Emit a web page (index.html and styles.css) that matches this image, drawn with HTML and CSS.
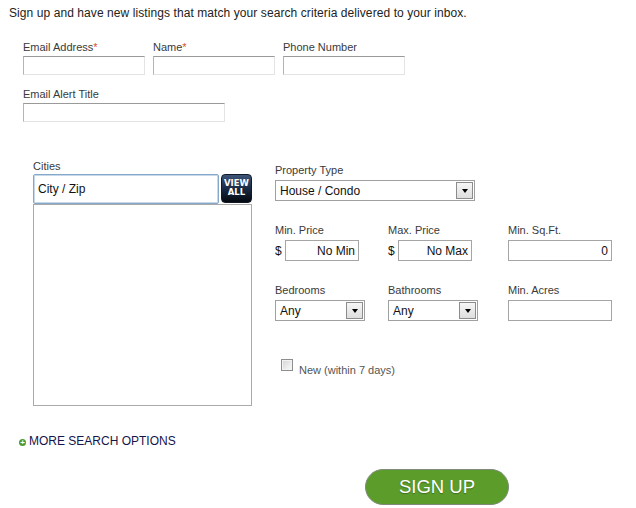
FILE: index.html
```html
<!DOCTYPE html>
<html lang="en">
    <head>
        <meta charset="utf-8">
        <title>Email Alert Sign Up</title>
        <link rel="stylesheet" href="styles.css">
    </head>
    <body>
        <p class="intro">Sign up and have new listings that match your search criteria delivered to your inbox.</p>
        <form action="#" class="alert-form">
            <div class="contact">
                <div class="field">
                    <label for="email">Email Address<span class="req">*</span></label>
                    <input type="text" id="email" class="txt">
                </div>
                <div class="field">
                    <label for="name">Name<span class="req">*</span></label>
                    <input type="text" id="name" class="txt">
                </div>
                <div class="field">
                    <label for="phone">Phone Number</label>
                    <input type="text" id="phone" class="txt">
                </div>
            </div>
            <div class="field alert-title">
                <label for="title">Email Alert Title</label>
                <input type="text" id="title" class="txt txt-wide">
            </div>

            <div class="search">
                <div class="cities">
                    <label for="city">Cities</label>
                    <div class="city-top">
                        <input type="text" id="city" class="city-input" value="City / Zip">
                        <a href="#" class="view-all">VIEW<br>ALL</a>
                    </div>
                    <div class="city-list"></div>
                </div>

                <div class="criteria">
                    <div class="field full">
                        <label>Property Type</label>
                        <div class="select select-type"><span class="select-value">House / Condo</span><span class="select-arrow"></span></div>
                    </div>

                    <div class="field">
                        <label for="minprice">Min. Price</label>
                        <div class="price"><span class="dollar">$</span><input type="text" id="minprice" class="num" value="No Min"></div>
                    </div>
                    <div class="field">
                        <label for="maxprice">Max. Price</label>
                        <div class="price"><span class="dollar">$</span><input type="text" id="maxprice" class="num" value="No Max"></div>
                    </div>
                    <div class="field">
                        <label for="sqft">Min. Sq.Ft.</label>
                        <input type="text" id="sqft" class="num num-wide" value="0">
                    </div>

                    <div class="field">
                        <label>Bedrooms</label>
                        <div class="select select-small"><span class="select-value">Any</span><span class="select-arrow"></span></div>
                    </div>
                    <div class="field">
                        <label>Bathrooms</label>
                        <div class="select select-small"><span class="select-value">Any</span><span class="select-arrow"></span></div>
                    </div>
                    <div class="field">
                        <label for="acres">Min. Acres</label>
                        <input type="text" id="acres" class="num num-wide">
                    </div>

                    <div class="check full">
                        <span class="box"></span>
                        <span class="check-text">New (within 7 days)</span>
                    </div>
                </div>
            </div>

            <a href="#" class="more"><span class="plus"></span>MORE SEARCH OPTIONS</a>

            <a href="#" class="signup">SIGN UP</a>
        </form>
    </body>
</html>
```

FILE: styles.css
```css
* {
    margin: 0;
    padding: 0;
    box-sizing: border-box;
}
body {
    font-family: "Liberation Sans", Arial, sans-serif;
    color: #333;
    background: #fff;
}
a {
    text-decoration: none;
}
.intro {
    font-size: 12px;
    line-height: 15px;
    letter-spacing: 0.08px;
    color: #222;
    margin: 6px 0 0 9px;
}
.alert-form {
    padding-left: 23px;
}
label {
    display: block;
    font-size: 11px;
    line-height: 13px;
    color: #3a3a3a;
    margin-bottom: 2px;
}
.req {
    color: #e0501c;
}
.contact {
    display: flex;
    gap: 8px;
    margin-top: 20px;
}
.txt {
    display: block;
    width: 122px;
    height: 19px;
    border: 1px solid;
    border-color: #9a9a9a #e4e4e4 #e4e4e4 #b4b4b4;
    outline: none;
    font-size: 12px;
}
.txt-wide {
    width: 202px;
}
.alert-title {
    margin-top: 13px;
}

/* search block */
.search {
    display: flex;
    margin-top: 38px;
}
.cities {
    width: 219px;
    margin-left: 10px;
}
.cities label {
    margin-bottom: 1px;
}
.city-top {
    display: flex;
    gap: 2px;
}
.city-input {
    flex: 1;
    min-width: 0;
    height: 30px;
    border: 1px solid #86a8c8;
    border-radius: 2px;
    box-shadow: inset 0 0 0 1px #c6d8ea;
    padding-left: 4px;
    font-family: "Liberation Sans", Arial, sans-serif;
    font-size: 12px;
    color: #111;
    outline: none;
}
.view-all {
    width: 31px;
    height: 29px;
    border: 1px solid #121a28;
    border-radius: 4px;
    background: linear-gradient(#3d5578, #1a2a44 50%, #05080f);
    color: #fff;
    font-family: "DejaVu Sans", Verdana, sans-serif;
    font-size: 8.5px;
    font-weight: bold;
    line-height: 9px;
    text-align: center;
    padding-top: 4px;
}
.city-list {
    height: 202px;
    border: 1px solid #aaa;
}

.criteria {
    display: grid;
    grid-template-columns: 113px 120px 104px;
    row-gap: 23px;
    align-content: start;
    margin-left: 23px;
    padding-top: 4px;
}
.criteria label {
    margin-bottom: 3px;
}
.full {
    grid-column: 1 / -1;
}
.select {
    display: flex;
    align-items: center;
    height: 21px;
    border: 1px solid #a0a0a0;
    background: #fff;
    font-size: 12px;
    color: #111;
}
.select-type {
    width: 200px;
}
.select-small {
    width: 90px;
}
.select-value {
    flex: 1;
    padding-left: 4px;
}
.select-arrow {
    display: flex;
    align-items: center;
    justify-content: center;
    width: 17px;
    height: 17px;
    margin-right: 1px;
    border: 1px solid #8c8c8c;
    background: linear-gradient(#f6f6f6, #dedede);
}
.select-arrow::after {
    content: "";
    border-left: 3.5px solid transparent;
    border-right: 3.5px solid transparent;
    border-top: 4px solid #000;
    margin-top: 1px;
}
.price {
    display: flex;
    align-items: center;
}
.dollar {
    width: 10px;
    font-size: 12px;
    color: #111;
}
.num {
    display: block;
    width: 74px;
    height: 21px;
    border: 1px solid #a5a5a5;
    padding-right: 3px;
    text-align: right;
    font-family: "Liberation Sans", Arial, sans-serif;
    font-size: 12px;
    color: #111;
    outline: none;
}
.num-wide {
    width: 104px;
}
.check {
    display: flex;
    align-items: flex-start;
    gap: 6px;
    margin: 15px 0 0 6px;
}
.box {
    width: 12px;
    height: 12px;
    border: 1px solid #8e8e8e;
    box-shadow: inset 0 0 0 1px #f2f2f2;
    background: linear-gradient(135deg, #d4d4d4, #fbfbfb);
}
.check-text {
    font-size: 11px;
    line-height: 13px;
    color: #555;
    margin-top: 5px;
}

.more {
    display: flex;
    align-items: center;
    gap: 3px;
    margin: 28px 0 0 -4px;
    font-size: 12px;
    line-height: 15px;
    color: #15154a;
    width: max-content;
}
.plus {
    display: flex;
    align-items: center;
    justify-content: center;
    width: 7px;
    height: 7px;
    border-radius: 50%;
    background: #4f9a33;
    margin-top: 2px;
}
.plus::after {
    content: "+";
    color: #fff;
    font-size: 8px;
    line-height: 7px;
    font-weight: bold;
}
.signup {
    display: flex;
    align-items: center;
    justify-content: center;
    width: 144px;
    height: 36px;
    margin: 20px 0 0 342px;
    border: 1px solid #7f8a78;
    border-radius: 18px;
    background: #5b9c2b;
    color: #fff;
    font-size: 18.5px;
    text-shadow: 0 1px 1px rgba(0, 0, 0, 0.3);
}
```
